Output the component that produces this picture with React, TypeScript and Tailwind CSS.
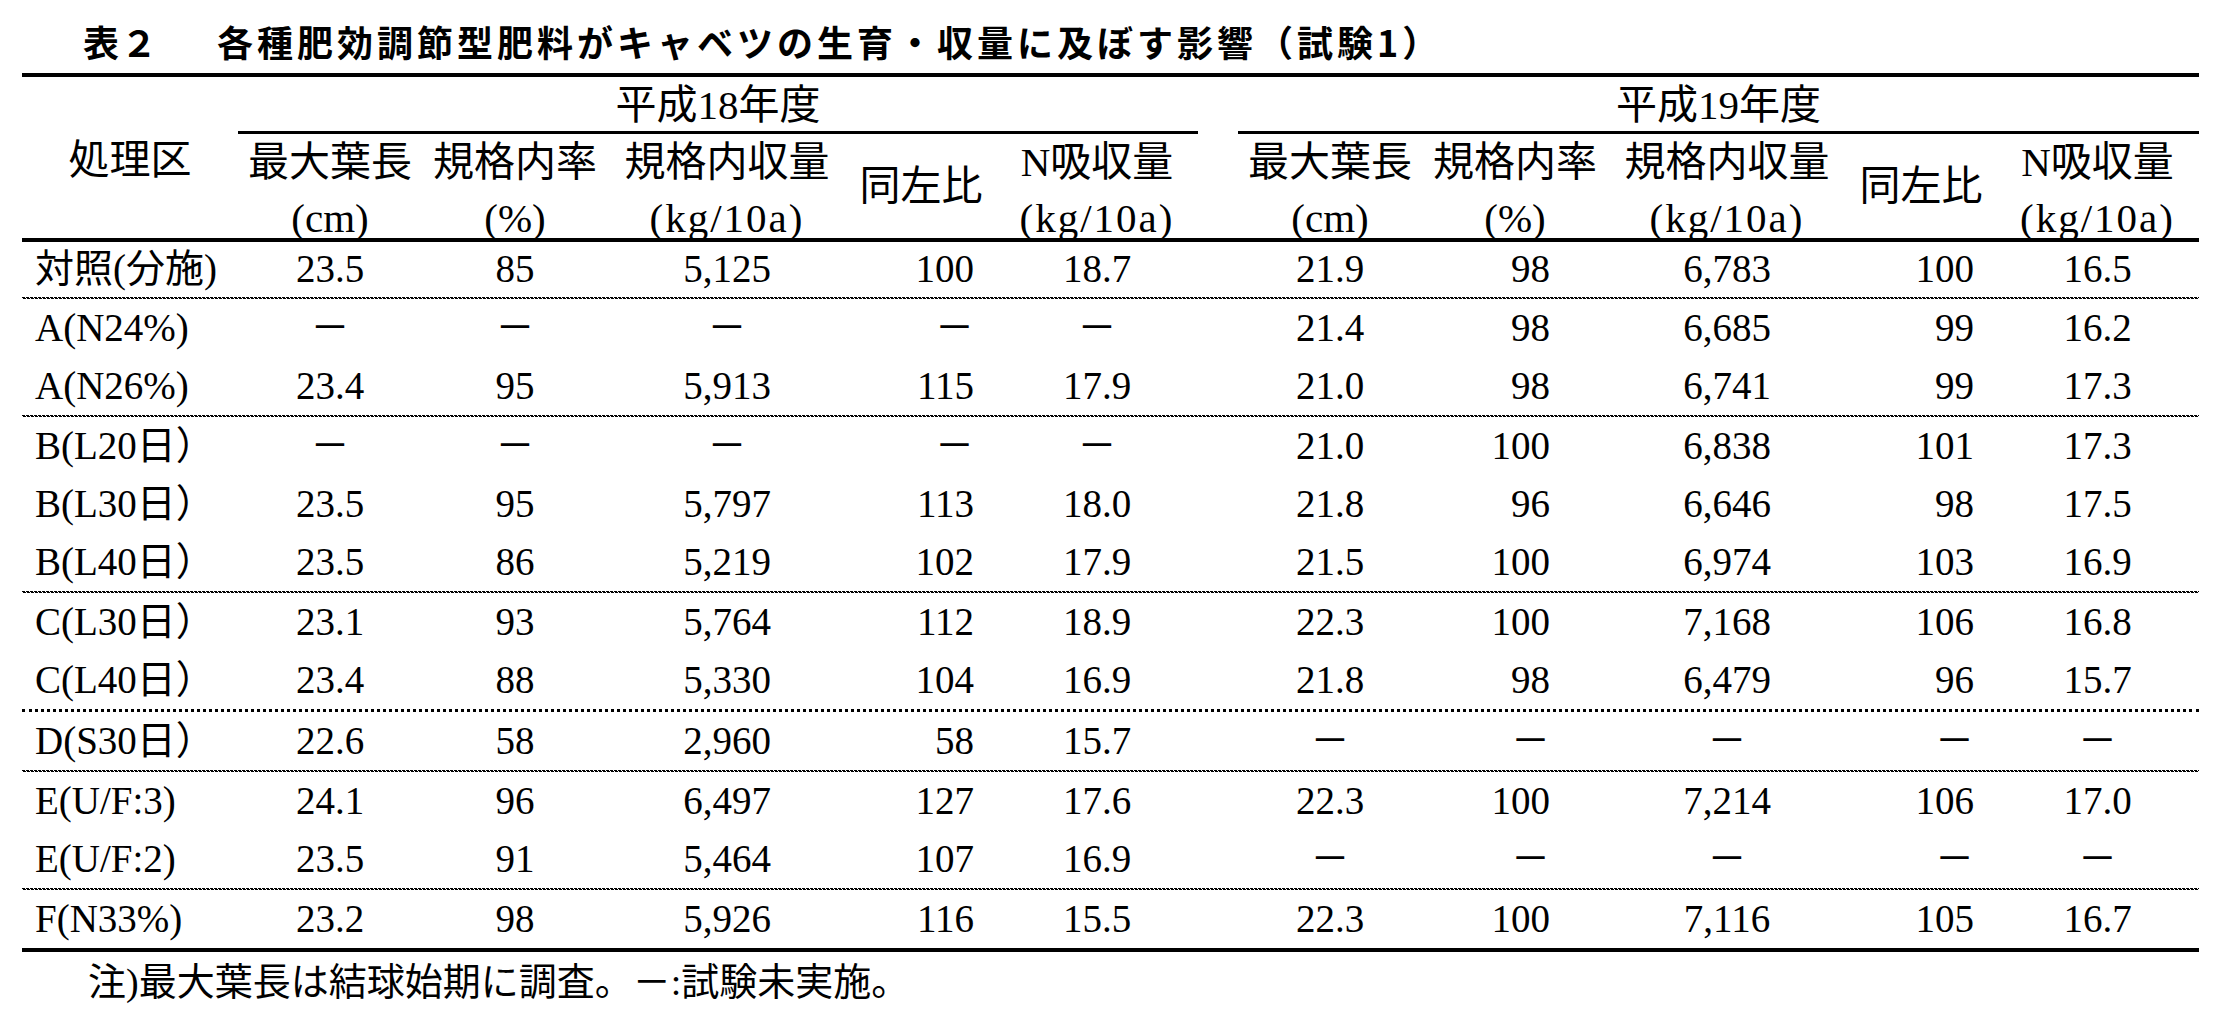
const serif = "font-['Liberation_Serif','Noto_Sans_CJK_JP',serif]"

type Vals = string[] | null

const rows: { name: string; h18: Vals; h19: Vals }[][] = [
  [{ name: '対照(分施)', h18: ['23.5', '85', '5,125', '100', '18.7'], h19: ['21.9', '98', '6,783', '100', '16.5'] }],
  [
    { name: 'A(N24%)', h18: null, h19: ['21.4', '98', '6,685', '99', '16.2'] },
    { name: 'A(N26%)', h18: ['23.4', '95', '5,913', '115', '17.9'], h19: ['21.0', '98', '6,741', '99', '17.3'] },
  ],
  [
    { name: 'B(L20日）', h18: null, h19: ['21.0', '100', '6,838', '101', '17.3'] },
    { name: 'B(L30日）', h18: ['23.5', '95', '5,797', '113', '18.0'], h19: ['21.8', '96', '6,646', '98', '17.5'] },
    { name: 'B(L40日）', h18: ['23.5', '86', '5,219', '102', '17.9'], h19: ['21.5', '100', '6,974', '103', '16.9'] },
  ],
  [
    { name: 'C(L30日）', h18: ['23.1', '93', '5,764', '112', '18.9'], h19: ['22.3', '100', '7,168', '106', '16.8'] },
    { name: 'C(L40日）', h18: ['23.4', '88', '5,330', '104', '16.9'], h19: ['21.8', '98', '6,479', '96', '15.7'] },
  ],
  [{ name: 'D(S30日）', h18: ['22.6', '58', '2,960', '58', '15.7'], h19: null }],
  [
    { name: 'E(U/F:3)', h18: ['24.1', '96', '6,497', '127', '17.6'], h19: ['22.3', '100', '7,214', '106', '17.0'] },
    { name: 'E(U/F:2)', h18: ['23.5', '91', '5,464', '107', '16.9'], h19: null },
  ],
  [{ name: 'F(N33%)', h18: ['23.2', '98', '5,926', '116', '15.5'], h19: ['22.3', '100', '7,116', '105', '16.7'] }],
]

// separator drawn after each group except the last
const separators = ['wavy', 'wavy', 'wavy', 'dots', 'wavy', 'wavy']

const h18Cells = ['w-[184px] text-center', 'w-[186px] text-center', 'w-[238px] text-center', 'w-[150px] pr-[22px] text-right', 'w-[202px] text-center']
const h19Cells = ['w-[184px] text-center', 'w-[186px] pr-[58px] text-right', 'w-[238px] text-center', 'w-[150px] pr-[22px] text-right', 'w-[203px] text-center']

function Cells({ values, classes }: { values: Vals; classes: string[] }) {
  return (
    <>
      {classes.map((cls, i) => (
        <div className={cls} key={i}>
          {values ? values[i] : '－'}
        </div>
      ))}
    </>
  )
}

function Wavy() {
  return (
    <div className="flex flex-col">
      <div className="h-px bg-[image:repeating-linear-gradient(90deg,#000_0_3px,transparent_3px_4px)]" />
      <div className="h-px bg-[image:repeating-linear-gradient(90deg,transparent_0_1px,#000_1px_4px)]" />
    </div>
  )
}

function HeaderGroup({ title, lastWidth }: { title: string; lastWidth: string }) {
  return (
    <div className="flex flex-col">
      <div className="flex h-[54px] items-center justify-center pt-[4px]">{title}</div>
      <div className="h-[3px] bg-black" />
      <div className="flex h-[104px] leading-[56px]">
        <div className="flex w-[184px] flex-col items-center">
          <span>最大葉長</span>
          <span>(cm)</span>
        </div>
        <div className="flex w-[186px] flex-col items-center">
          <span>規格内率</span>
          <span>(%)</span>
        </div>
        <div className="flex w-[238px] flex-col items-center">
          <span>規格内収量</span>
          <span className="tracking-[2px]">(kg/10a)</span>
        </div>
        <div className="flex w-[150px] items-center justify-center">同左比</div>
        <div className={`flex flex-col items-center ${lastWidth}`}>
          <span>N吸収量</span>
          <span className="tracking-[2px]">(kg/10a)</span>
        </div>
      </div>
    </div>
  )
}

export default function App() {
  return (
    <main className={`min-h-screen bg-white text-black ${serif}`}>
      <div className="ml-[22px] w-[2177px]">
        <h1 className="flex h-[73px] items-center whitespace-nowrap pl-[61px] pt-[8px] font-['Noto_Sans_CJK_JP',sans-serif] text-[36px] font-bold">
          <span className="tracking-[2px]">表２</span>
          <span className="ml-[58px] tracking-[4px]">各種肥効調節型肥料がキャベツの生育・収量に及ぼす影響（試験1）</span>
        </h1>
        <div className="h-[4px] bg-black" />

        <div className="flex h-[161px] text-[41px]">
          <div className="flex w-[216px] items-center justify-center pt-[6px]">処理区</div>
          <div className="w-[960px]">
            <HeaderGroup title="平成18年度" lastWidth="w-[202px]" />
          </div>
          <div className="w-[40px]" />
          <div className="w-[961px]">
            <HeaderGroup title="平成19年度" lastWidth="w-[203px]" />
          </div>
        </div>
        <div className="h-[4px] bg-black" />

        <div className="text-[39px]">
          {rows.map((group, gi) => (
            <div key={gi}>
              {group.map((row, ri) => (
                <div className={`flex items-center ${gi === 0 && ri === 0 ? 'h-[55px]' : 'h-[58px]'}`} key={row.name}>
                  <div className="w-[216px] whitespace-nowrap pl-[13px]">{row.name}</div>
                  <Cells classes={h18Cells} values={row.h18} />
                  <div className="w-[40px]" />
                  <Cells classes={h19Cells} values={row.h19} />
                </div>
              ))}
              {gi < separators.length ? (
                separators[gi] === 'dots' ? <div className="h-[3px] border-t-[3px] border-dotted border-black" /> : <Wavy />
              ) : null}
            </div>
          ))}
        </div>
        <div className="h-[4px] bg-black" />

        <p className="flex h-[60px] items-center pl-[66px] text-[38px]">注)最大葉長は結球始期に調査。－:試験未実施。</p>
      </div>
    </main>
  )
}
